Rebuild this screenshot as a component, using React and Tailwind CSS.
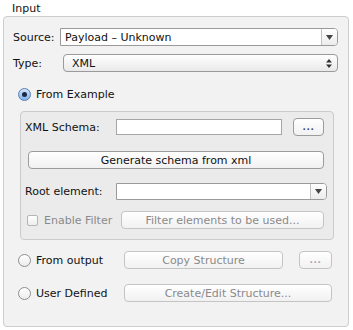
import React from 'react';

const font = { fontFamily: '"DejaVu Sans", "Liberation Sans", sans-serif' };

function Radio({ checked }) {
  if (checked) {
    return (
      <span className="flex h-[13px] w-[13px] shrink-0 items-center justify-center rounded-full border border-[#5a7fb8] bg-gradient-to-b from-[#d3e6fb] to-[#7fb1ea]">
        <span className="h-[5px] w-[5px] rounded-full bg-[#1d2a44]" />
      </span>
    );
  }
  return <span className="block h-[13px] w-[13px] shrink-0 rounded-full border border-[#8e8e8e] bg-gradient-to-b from-[#ffffff] to-[#ececec]" />;
}

function Button({ children, className = '', disabled }) {
  return (
    <div
      className={`flex h-[18px] shrink-0 items-center justify-center rounded-[4px] border bg-gradient-to-b from-[#ffffff] to-[#f1f1f1] ${
        disabled ? 'border-[#c4c4c4] text-[#8a8a8a]' : 'border-[#9c9c9c] text-[#111]'
      } ${className}`}
    >
      {children}
    </div>
  );
}

function Dots({ disabled }) {
  return (
    <span className={`text-[9px] font-bold tracking-[0.5px] ${disabled ? 'text-[#a0a4b0]' : 'text-[#3a4670]'}`}>...</span>
  );
}

function ComboArrow() {
  return (
    <div className="flex h-full w-[16px] items-center justify-center border-l border-[#c2c2c2] bg-gradient-to-b from-[#ffffff] to-[#ececec]">
      <svg width="7" height="5" viewBox="0 0 7 5">
        <path d="M0 0 H7 L3.5 5 Z" fill="#444" />
      </svg>
    </div>
  );
}

export default function App() {
  return (
    <div className="h-[330px] w-[353px] overflow-hidden bg-white text-[11px] leading-none text-[#111]" style={font}>
      <div className="h-[16px] pl-[12px] pt-[3px]">Input</div>

      <div className="ml-[3px] flex h-[311px] w-[346px] flex-col rounded-[4px] border border-[#cdcdcd] bg-[#f2f2f2]">
        {/* Source */}
        <div className="mt-[11px] flex h-[18px] items-center">
          <span className="w-[56px] pl-[9px]">Source:</span>
          <div className="flex h-[18px] w-[278px] items-stretch overflow-hidden rounded-r-[4px] border border-[#9a9a9a] bg-white">
            <span className="flex flex-1 items-center pl-[4px]">Payload – Unknown</span>
            <ComboArrow />
          </div>
        </div>

        {/* Type */}
        <div className="mt-[8px] flex h-[18px] items-center">
          <span className="w-[59px] pl-[9px]">Type:</span>
          <div className="flex h-[18px] w-[275px] items-center justify-between rounded-[4px] border border-[#9a9a9a] bg-gradient-to-b from-[#ffffff] to-[#e9e9e9] pl-[8px] pr-[5px]">
            <span>XML</span>
            <svg width="6" height="9" viewBox="0 0 6 9">
              <path d="M0 3.5 L3 0 L6 3.5 Z M0 5.5 L3 9 L6 5.5 Z" fill="#333" />
            </svg>
          </div>
        </div>

        {/* From Example */}
        <div className="ml-[14px] mt-[16px] flex h-[13px] items-center gap-[5px]">
          <Radio checked />
          <span>From Example</span>
        </div>

        {/* Inner group */}
        <div className="ml-[16px] mt-[10px] flex h-[129px] w-[314px] flex-col rounded-[4px] border border-[#cbcbcb] bg-[#ebebeb]">
          <div className="mt-[6px] flex h-[18px] items-center">
            <span className="w-[95px] pl-[4px]">XML Schema:</span>
            <div className="h-[16px] w-[166px] border border-[#a6a6a6] bg-white" />
            <Button className="ml-[11px] w-[31px]">
              <Dots />
            </Button>
          </div>

          <Button className="ml-[7px] mt-[15px] w-[296px]">Generate schema from xml</Button>

          <div className="mt-[14px] flex h-[17px] items-center">
            <span className="w-[95px] pl-[4px]">Root element:</span>
            <div className="flex h-[17px] w-[211px] items-stretch overflow-hidden rounded-r-[4px] border border-[#9a9a9a] bg-white">
              <span className="flex-1" />
              <ComboArrow />
            </div>
          </div>

          <div className="mt-[11px] flex h-[18px] items-center">
            <span className="ml-[6px] block h-[11px] w-[11px] shrink-0 rounded-[2px] border border-[#b5b5b5] bg-gradient-to-b from-[#ffffff] to-[#eeeeee]" />
            <span className="ml-[6px] w-[77px] text-[#8a8a8a]">Enable Filter</span>
            <Button disabled className="w-[203px]">Filter elements to be used...</Button>
          </div>
        </div>

        {/* From output */}
        <div className="mt-[11px] flex h-[18px] items-center">
          <span className="ml-[14px]"><Radio /></span>
          <span className="ml-[5px] w-[88px]">From output</span>
          <Button disabled className="w-[159px]">Copy Structure</Button>
          <Button disabled className="ml-[16px] w-[33px]">
            <Dots disabled />
          </Button>
        </div>

        {/* User Defined */}
        <div className="mt-[15px] flex h-[18px] items-center">
          <span className="ml-[14px]"><Radio /></span>
          <span className="ml-[5px] w-[88px]">User Defined</span>
          <Button disabled className="w-[208px]">Create/Edit Structure...</Button>
        </div>
      </div>
    </div>
  );
}
